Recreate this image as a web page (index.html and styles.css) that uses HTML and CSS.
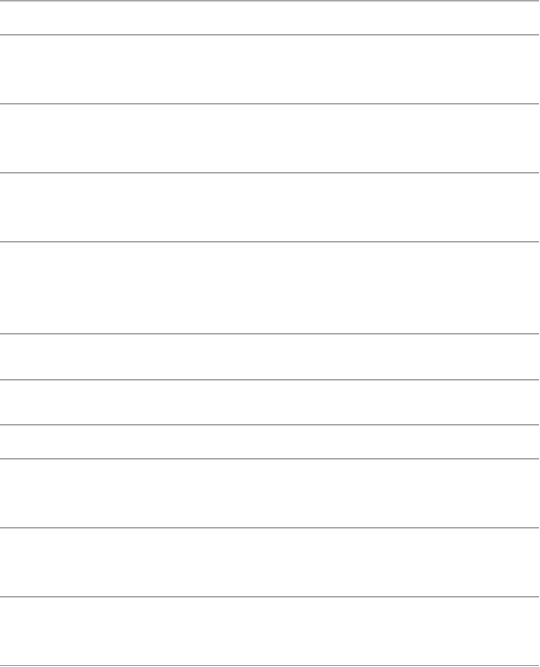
FILE: index.html
```
<!DOCTYPE html>
<html lang="en">
<head>
<meta charset="utf-8">
<title>List</title>
<link rel="stylesheet" href="styles.css">
</head>
<body>
<div class="list">
  <div class="row h34"></div>
  <div class="row h69"></div>
  <div class="row h69"></div>
  <div class="row h69"></div>
  <div class="row h92"></div>
  <div class="row h46"></div>
  <div class="row h45"></div>
  <div class="row h34"></div>
  <div class="row h69"></div>
  <div class="row h69"></div>
  <div class="row h69 last"></div>
</div>
</body>
</html>
```
FILE: styles.css
```
html, body {
  margin: 0;
  padding: 0;
  background: #fff;
  font-family: "Liberation Sans", Arial, sans-serif;
}
.list {
  width: 539px;
  display: flex;
  flex-direction: column;
}
.row {
  box-sizing: border-box;
  border-top: 1px solid #a3a3a3;
  box-shadow: inset 0 1px 0 #d2d2d2;
}
.row.last {
  border-bottom: 1px solid #a3a3a3;
}
.h34 { height: 34px; }
.h45 { height: 45px; }
.h46 { height: 46px; }
.h69 { height: 69px; }
.h92 { height: 92px; }
.h69.last { height: 70px; }
```
